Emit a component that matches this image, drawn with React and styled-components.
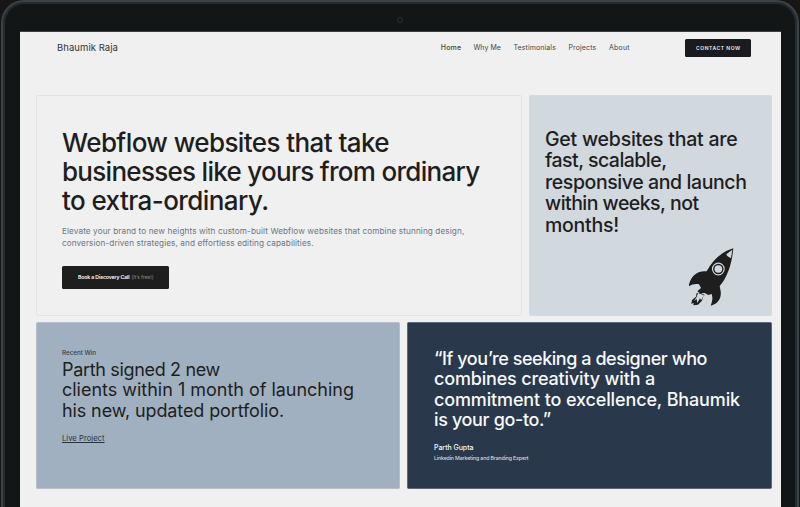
import React from 'react';
import styled, { createGlobalStyle } from 'styled-components';

const GlobalStyle = createGlobalStyle`
  * { box-sizing: border-box; }
  html, body { margin: 0; height: 100%; overflow: hidden; background: #181514; }
  body { font-family: Inter, "Liberation Sans", sans-serif; color: #1e1e1e; }
  h1, h2, p { margin: 0; font-weight: inherit; }
`;

const Laptop = styled.div`
  height: 507px;
  width: 800px;
  overflow: hidden;
  padding: 0 1px 0 1px;
  background: #181514;
`;

const Bezel = styled.div`
  height: 540px;
  border: 2px solid #3a4448;
  border-radius: 23px 23px 0 0;
  background: #121616;
  box-shadow: inset 0 0 0 2px #252c2f;
  padding: 0 17px;
`;

const CameraBar = styled.div`
  height: 30px;
  display: flex;
  justify-content: center;
  padding-top: 15px;
`;

const Camera = styled.div`
  width: 6px;
  height: 6px;
  border: 1px solid #2b3032;
  border-radius: 50%;
`;

const Screen = styled.div`
  width: 761px;
  height: 510px;
  background: #f0f0f0;
  border-top: 1px solid #3c4142;
  margin-top: -1px;
`;

const Header = styled.header`
  height: 32px;
  display: flex;
  align-items: center;
  padding: 0 30.5px 1px 37px;
`;

const Text = styled.span`
  display: block;
  white-space: pre;
  letter-spacing: ${(p) => p.$ls || 0}px;
`;

const Brand = styled.div`
  font-size: 9.5px;
  color: #333538;
  flex: 1;
`;

const Nav = styled.nav`
  display: grid;
  grid-template-columns: 32.6px 40px 55px 40.5px 76.1px;
  font-size: 7px;
  color: #44464a;
`;

const NavItem = styled.a`
  font-weight: ${(p) => (p.$active ? 500 : 400)};
`;

const ContactButton = styled.button`
  width: 65.5px;
  height: 18px;
  border: 0;
  border-radius: 1.5px;
  padding: 0 0 0 11px;
  text-align: left;
  background: #1a1b1f;
  color: #eeeeee;
  font: 600 5px Inter, sans-serif;
`;

const Board = styled.main`
  display: flex;
  flex-direction: column;
  gap: 6.5px;
  padding: 31px 9px 0 15.5px;
`;

const TopRow = styled.section`
  display: grid;
  grid-template-columns: 486.5px 243px;
  gap: 7px;
  height: 220.5px;
`;

const BottomRow = styled.section`
  display: grid;
  grid-template-columns: 364.7px 364.8px;
  gap: 7px;
  height: 167.4px;
`;

const Card = styled.article`
  display: flex;
  flex-direction: column;
  align-items: flex-start;
  border: 1px solid ${(p) => p.$edge};
  border-radius: 1.5px;
  background: ${(p) => p.$fill};
  color: ${(p) => p.$ink || '#1e1e1e'};
  padding: ${(p) => p.$pad};
`;

const HeroTitle = styled.h1`
  font-size: 26px;
  line-height: 29.2px;
  font-weight: 500;
`;

const HeroCopy = styled.p`
  margin-top: 9.7px;
  font-size: 8.2px;
  line-height: 12px;
  color: #6c7581;
`;

const BookButton = styled.button`
  display: flex;
  align-items: center;
  gap: 2px;
  width: 107px;
  height: 23px;
  margin-top: 17px;
  padding: 0 0 0 16px;
  border: 0;
  border-radius: 1.5px;
  background: #1e1e1e;
  color: #fff;
  font: 600 5.2px Inter, sans-serif;
`;

const ButtonNote = styled.span`
  color: #858585;
  font-weight: 400;
`;

const SpeedTitle = styled.h2`
  font-size: 19.5px;
  line-height: 21.65px;
  font-weight: 500;
`;

const RocketIcon = styled.svg`
  width: 56px;
  height: 66px;
  margin: 7px 0 0 139px;
`;

const CardTitle = styled.h2`
  font-size: 18px;
  line-height: 20.35px;
  font-weight: ${(p) => p.$weight};
`;

const Label = styled.p`
  margin-bottom: 2.9px;
  font-size: 6.3px;
  line-height: 8px;
  font-weight: 500;
  color: #373f46;
`;

const ProjectLink = styled.a`
  margin-top: 12.2px;
  font-size: 7.6px;
  line-height: 11px;
  color: #29323b;
  text-decoration: underline;
  text-underline-offset: 1px;
  text-decoration-thickness: 1px;
`;

const Author = styled.p`
  margin-top: 12.5px;
  font-size: 7px;
  line-height: 10px;
  font-weight: 500;
`;

const Role = styled.p`
  margin-top: 1.5px;
  font-size: 5.2px;
  line-height: 8px;
  font-weight: 500;
  color: #d8dce1;
`;

const navItems = [
  ['Home', 0.18],
  ['Why Me', 0.04],
  ['Testimonials', 0.11],
  ['Projects', 0.14],
  ['About', 0.25],
];

function Lines({ items }) {
  return items.map(([text, ls]) => (
    <Text key={text} $ls={ls}>{text}</Text>
  ));
}

function Rocket() {
  return (
    <RocketIcon viewBox="0 0 168 198">
      <path
        fill="#1e1e1e"
        d="M148 13 C121 20 88 43 68 82 C45 79 23 91 15 121 L15 127 C25 120 35 119 45 121 L51 132 L40 142 L47 147 L62 147 L73 153 L83 150 C87 162 85 172 80 185 C100 180 113 165 110 142 L107 126 C133 97 144 54 148 13 Z"
      />
      <path fill="#d1d8de" d="M145 17 L127 31 Q128 38 141 42 Z" />
      <circle cx="103" cy="75" r="17.5" fill="#1e1e1e" stroke="#d1d8de" strokeWidth="3.5" />
      <circle cx="103" cy="75" r="11.5" fill="#d1d8de" />
      <path fill="#1e1e1e" d="M38 147 L36 158 L24 168 L22 180 L29 176 L28 184 L42 182 L54 170 L57 158 L62 153 L50 146 Z" />
      <path fill="#d1d8de" d="M42 147 L60 154 L51 169 L48 163 L40 177 L38 165 L30 171 L38 159 Z" />
    </RocketIcon>
  );
}

export default function App() {
  return (
    <Laptop>
      <GlobalStyle />
      <Bezel>
        <CameraBar><Camera /></CameraBar>
        <Screen>
          <Header>
            <Brand><Text $ls={0.055}>Bhaumik Raja</Text></Brand>
            <Nav>
              {navItems.map(([name, ls], i) => (
                <NavItem key={name} $active={i === 0}><Text $ls={ls}>{name}</Text></NavItem>
              ))}
            </Nav>
            <ContactButton><Text $ls={0.56}>CONTACT NOW</Text></ContactButton>
          </Header>
          <Board>
            <TopRow>
              <Card $fill="#f0f0f0" $edge="#e2e4e5" $pad="31.5px 0 0 25.5px">
                <HeroTitle>
                  <Lines items={[
                    ['Webflow websites that take', -0.58],
                    ['businesses like yours from ordinary', -0.71],
                    ['to extra-ordinary.', -0.58],
                  ]} />
                </HeroTitle>
                <HeroCopy>
                  <Lines items={[
                    ['Elevate your brand to new heights with custom-built Webflow websites that combine stunning design,', 0.095],
                    ['conversion-driven strategies, and effortless editing capabilities.', 0.085],
                  ]} />
                </HeroCopy>
                <BookButton>
                  <Text $ls={-0.136}>Book a Discovery Call</Text>
                  <ButtonNote><Text $ls={-0.128}>(It’s free!)</Text></ButtonNote>
                </BookButton>
              </Card>
              <Card $fill="#d1d8de" $edge="#d5dadf" $pad="32.5px 0 0 15px">
                <SpeedTitle>
                  <Lines items={[
                    ['Get websites that are', -0.225],
                    ['fast, scalable,', -0.535],
                    ['responsive and launch', -0.409],
                    ['within weeks, not', -0.531],
                    ['months!', -0.237],
                  ]} />
                </SpeedTitle>
                <Rocket />
              </Card>
            </TopRow>
            <BottomRow>
              <Card $fill="#a0b0c0" $edge="#b3c0cc" $pad="26px 0 0 25.5px">
                <Label><Text $ls={-0.033}>Recent Win</Text></Label>
                <CardTitle $weight={400}>
                  <Lines items={[
                    ['Parth signed 2 new', -0.331],
                    ['clients within 1 month of launching', -0.014],
                    ['his new, updated portfolio.', -0.113],
                  ]} />
                </CardTitle>
                <ProjectLink><Text $ls={0.038}>Live Project</Text></ProjectLink>
              </Card>
              <Card $fill="#2a384b" $edge="#5d6979" $ink="#f7f8f9" $pad="26px 0 0 25.8px">
                <CardTitle $weight={500}>
                  <Lines items={[
                    ['“If you’re seeking a designer who', -0.446],
                    ['combines creativity with a', -0.17],
                    ['commitment to excellence, Bhaumik', -0.134],
                    ['is your go-to.”', -0.357],
                  ]} />
                </CardTitle>
                <Author><Text $ls={-0.037}>Parth Gupta</Text></Author>
                <Role><Text $ls={-0.12}>Linkedin Marketing and Branding Expert</Text></Role>
              </Card>
            </BottomRow>
          </Board>
        </Screen>
      </Bezel>
    </Laptop>
  );
}
